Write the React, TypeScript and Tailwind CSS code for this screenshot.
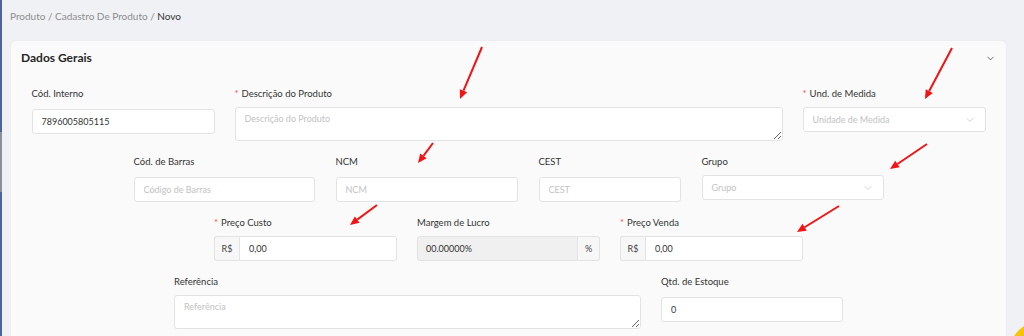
import { ChevronDown } from "lucide-react";

const arrows: [number, number, number, number][] = [
  [482, 47, 460, 99],
  [952, 48, 925, 99],
  [433, 143, 418, 163],
  [927, 144, 890, 169],
  [377, 205, 350, 225],
  [839, 206, 797, 232],
];

function Arrow({ x1, y1, x2, y2 }: { x1: number; y1: number; x2: number; y2: number }) {
  const dx = x2 - x1;
  const dy = y2 - y1;
  const len = Math.hypot(dx, dy);
  const ux = dx / len;
  const uy = dy / len;
  const hl = 9;
  const hw = 4;
  const bx = x2 - ux * hl;
  const by = y2 - uy * hl;
  const pts = `${x2},${y2} ${bx - uy * hw},${by + ux * hw} ${bx + uy * hw},${by - ux * hw}`;
  return (
    <g>
      <line x1={x1} y1={y1} x2={bx} y2={by} stroke="#f01414" strokeWidth={2} />
      <polygon points={pts} fill="#f01414" />
    </g>
  );
}

function Label({ text, required }: { text: string; required?: boolean }) {
  return (
    <div className="h-[20px] leading-[20px] mb-[3px] text-[9.5px] text-[#333] whitespace-nowrap">
      {required && <span className="text-[#ff4d4f] mr-[3px]">*</span>}
      {text}
    </div>
  );
}

const inputCls =
  "h-[25px] w-full rounded-[3px] border border-[#e3e3e3] bg-white px-[9px] text-[9px] text-[#333] outline-none placeholder:text-[#c2c2c2]";

function TextField({ w, label, required, placeholder, value }: { w: string; label: string; required?: boolean; placeholder?: string; value?: string }) {
  return (
    <div className={w}>
      <Label text={label} required={required} />
      <input className={inputCls} placeholder={placeholder} defaultValue={value} readOnly />
    </div>
  );
}

function SelectField({ w, label, required, placeholder }: { w: string; label: string; required?: boolean; placeholder: string }) {
  return (
    <div className={w}>
      <Label text={label} required={required} />
      <div className="h-[25px] flex items-center justify-between rounded-[3px] border border-[#e3e3e3] bg-white pl-[9px] pr-[9px] text-[9px] text-[#c2c2c2]">
        <span>{placeholder}</span>
        <ChevronDown size={12} strokeWidth={1.5} className="text-[#c2c2c2]" />
      </div>
    </div>
  );
}

function AreaField({ w, label, required, placeholder }: { w: string; label: string; required?: boolean; placeholder: string }) {
  return (
    <div className={w}>
      <Label text={label} required={required} />
      <textarea
        className="block h-[34px] w-full rounded-[3px] border border-[#e3e3e3] bg-white px-[9px] py-[4px] text-[9px] leading-[14px] outline-none placeholder:text-[#c2c2c2]"
        placeholder={placeholder}
        readOnly
      />
    </div>
  );
}

function MoneyField({ label }: { label: string }) {
  return (
    <div className="w-[183px]">
      <Label text={label} required />
      <div className="flex h-[25px] text-[9px]">
        <div className="w-[25px] flex items-center justify-center rounded-l-[3px] border border-r-0 border-[#e3e3e3] bg-[#f7f7f7] text-[#444]">
          R$
        </div>
        <input className="flex-1 min-w-0 rounded-r-[3px] border border-[#e3e3e3] bg-white px-[9px] text-[#333] outline-none" defaultValue="0,00" readOnly />
      </div>
    </div>
  );
}

export default function App() {
  return (
    <div className="relative h-[336px] overflow-hidden bg-[#f0f1f5] font-['Lato',sans-serif]">
      {/* sidebar edge */}
      <div className="absolute left-0 top-0 h-full w-[2px] bg-[#4f6399]">
        <div className="mt-[132px] h-[60px] bg-[#8a8f9b]" />
      </div>

      {/* Breadcrumb */}
      <div className="pl-[10px] pt-[8px] h-[24px] leading-[16px] text-[10px] text-[#8c8c8c]">
        Produto / Cadastro De Produto / <span className="text-[#333]">Novo</span>
      </div>

      {/* Card */}
      <div className="ml-[11px] mr-[18px] mt-[17px] rounded-[5px] bg-[#fafafa] shadow-[0_0_2px_rgba(0,0,0,0.06)] h-[320px]">
        <div className="h-[34px] flex items-center justify-between pl-[10px] pr-[10px]">
          <span className="text-[12px] font-bold text-[#262626]">Dados Gerais</span>
          <ChevronDown size={11} strokeWidth={1.8} className="text-[#555]" />
        </div>
        <div className="px-[20px] pt-[9px] flex flex-col gap-[11px]">
          <div className="flex justify-center gap-[20px]">
            <TextField w="w-[183px]" label="Cód. Interno" value="7896005805115" />
            <AreaField w="w-[548px]" label="Descrição do Produto" required placeholder="Descrição do Produto" />
            <SelectField w="w-[183px]" label="Und. de Medida" required placeholder="Unidade de Medida" />
          </div>
          <div className="flex justify-center gap-[21px]">
            <TextField w="w-[181px]" label="Cód. de Barras" placeholder="Código de Barras" />
            <TextField w="w-[182px]" label="NCM" placeholder="NCM" />
            <TextField w="w-[142px]" label="CEST" placeholder="CEST" />
            <SelectField w="w-[182px]" label="Grupo" placeholder="Grupo" />
          </div>
          <div className="flex justify-center gap-[20px]">
            <MoneyField label="Preço Custo" />
            <div className="w-[183px]">
              <Label text="Margem de Lucro" />
              <div className="flex h-[25px] text-[9px]">
                <div className="flex-1 flex items-center rounded-l-[3px] border border-[#e3e3e3] bg-[#f0f0f0] px-[8px] text-[#333]">
                  00.00000%
                </div>
                <div className="w-[22px] flex items-center justify-center rounded-r-[3px] border border-l-0 border-[#e3e3e3] bg-[#f7f7f7] text-[#444]">
                  %
                </div>
              </div>
            </div>
            <MoneyField label="Preço Venda" />
          </div>
          <div className="flex justify-center gap-[20px]">
            <AreaField w="w-[467px]" label="Referência" placeholder="Referência" />
            <TextField w="w-[182px]" label="Qtd. de Estoque" value="0" />
          </div>
        </div>
      </div>

      {/* floating button */}
      <div className="absolute left-[1008px] top-[320px] h-[72px] w-[72px] rounded-full bg-[#f6c40d]" />

      {/* annotation arrows */}
      <svg className="pointer-events-none absolute left-0 top-0" width={1024} height={336}>
        {arrows.map(([x1, y1, x2, y2], i) => (
          <Arrow key={i} x1={x1} y1={y1} x2={x2} y2={y2} />
        ))}
      </svg>
    </div>
  );
}
